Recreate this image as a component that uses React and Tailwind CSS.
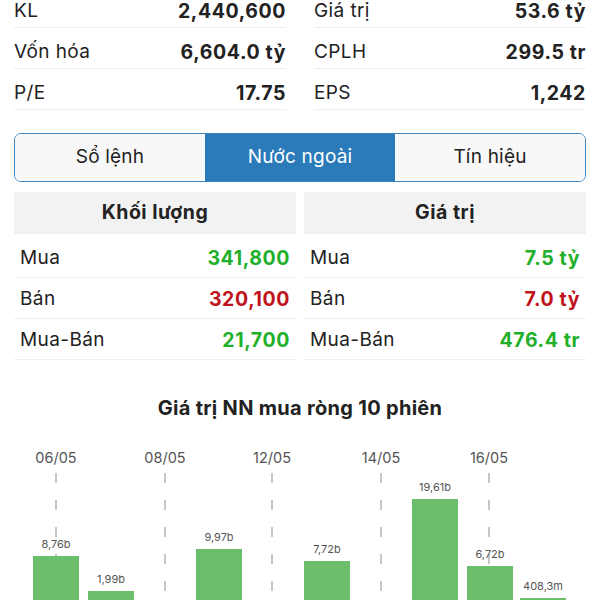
import React from 'react';

const stats = [
  [['KL', '2,440,600'], ['Giá trị', '53.6 tỷ']],
  [['Vốn hóa', '6,604.0 tỷ'], ['CPLH', '299.5 tr']],
  [['P/E', '17.75'], ['EPS', '1,242']],
];

const GREEN = 'text-[#22b02a]';
const RED = 'text-[#c0141c]';

const volRows = [
  ['Mua', '341,800', GREEN],
  ['Bán', '320,100', RED],
  ['Mua-Bán', '21,700', GREEN],
];

const valRows = [
  ['Mua', '7.5 tỷ', GREEN],
  ['Bán', '7.0 tỷ', RED],
  ['Mua-Bán', '476.4 tr', GREEN],
];

const dates = [
  ['06/05', 56],
  ['08/05', 165],
  ['12/05', 272],
  ['14/05', 381],
  ['16/05', 489],
];

// x, top of bar (svg coords), label
const bars = [
  [33, 126, '8,76b'],
  [88, 161, '1,99b'],
  [196, 119, '9,97b'],
  [304, 131, '7,72b'],
  [412, 69, '19,61b'],
  [467, 136, '6,72b'],
  [520, 168, '408,3m'],
];

const ForeignTable = ({ title, rows }) => (
  <div>
    <div className="h-[42px] bg-[#f2f2f2] flex items-center justify-center text-[19.5px] tracking-[0.5px] font-bold text-[#222]">
      {title}
    </div>
    <div className="pt-[3px]">
      {rows.map(([label, value, color]) => (
        <div key={label} className="h-[41px] pt-[3px] px-[6px] border-b border-[#efefef] flex items-center justify-between">
          <span className="text-[19px] tracking-[0.4px] text-[#222]">{label}</span>
          <span className={`text-[19.5px] tracking-[0.6px] font-bold ${color}`}>{value}</span>
        </div>
      ))}
    </div>
  </div>
);

const Chart = () => (
  <svg width="600" height="170" viewBox="0 0 600 170" className="block">
    {dates.map(([d, x]) => (
      <g key={d}>
        <text x={x} y="33" textAnchor="middle" fontSize="14.5" fill="#555" fontFamily="Inter, sans-serif">
          {d}
        </text>
        <line x1={x} y1="43" x2={x} y2="170" stroke="#b4b4b4" strokeWidth="1.5" strokeDasharray="10 17" />
      </g>
    ))}
    {bars.map(([x, top, label]) => (
      <g key={label}>
        <rect x={x} y={top} width="46" height={170 - top + 5} fill="#6cbe6a" />
        <text x={x + 23} y={top - 8} textAnchor="middle" fontSize="11" fill="#555" fontFamily="Inter, sans-serif">
          {label}
        </text>
      </g>
    ))}
  </svg>
);

const App = () => {
  return (
    <div className="w-[600px] h-[600px] overflow-hidden bg-white font-['Inter',sans-serif]">
      {/* stats */}
      <div className="-mt-[13px] px-[14px] grid grid-cols-2 gap-x-[28px]">
        {[0, 1].map(col => (
          <div key={col}>
            {stats.map(row => (
              <div key={row[col][0]} className="h-[41px] pt-[7px] border-b border-[#eeeeee] flex items-center justify-between">
                <span className="text-[19px] leading-[20px] tracking-[0.4px] text-[#222]">{row[col][0]}</span>
                <span className="text-[19.5px] leading-[20px] tracking-[0.6px] font-bold text-[#222]">{row[col][1]}</span>
              </div>
            ))}
          </div>
        ))}
      </div>

      {/* tabs */}
      <div className="mx-[14px] mt-[23px] h-[49px] border-[1.5px] border-[#3b86c2] rounded-[7px] overflow-hidden grid grid-cols-3 text-[19px] tracking-[0.2px]">
        <div className="bg-[#f8f8f8] flex items-center justify-center text-[#222]">Sổ lệnh</div>
        <div className="bg-[#2b7bba] flex items-center justify-center text-white">Nước ngoài</div>
        <div className="bg-[#f8f8f8] flex items-center justify-center text-[#222]">Tín hiệu</div>
      </div>

      {/* foreign tables */}
      <div className="mx-[14px] mt-[10px] grid grid-cols-2 gap-x-[8px]">
        <ForeignTable title="Khối lượng" rows={volRows} />
        <ForeignTable title="Giá trị" rows={valRows} />
      </div>

      {/* chart */}
      <div className="mt-[34px] text-center text-[20px] tracking-[0.3px] font-bold text-[#222] leading-[28px]">
        Giá trị NN mua ròng 10 phiên
      </div>
      <div className="mt-[8px]">
        <Chart />
      </div>
    </div>
  );
};

export default App;
